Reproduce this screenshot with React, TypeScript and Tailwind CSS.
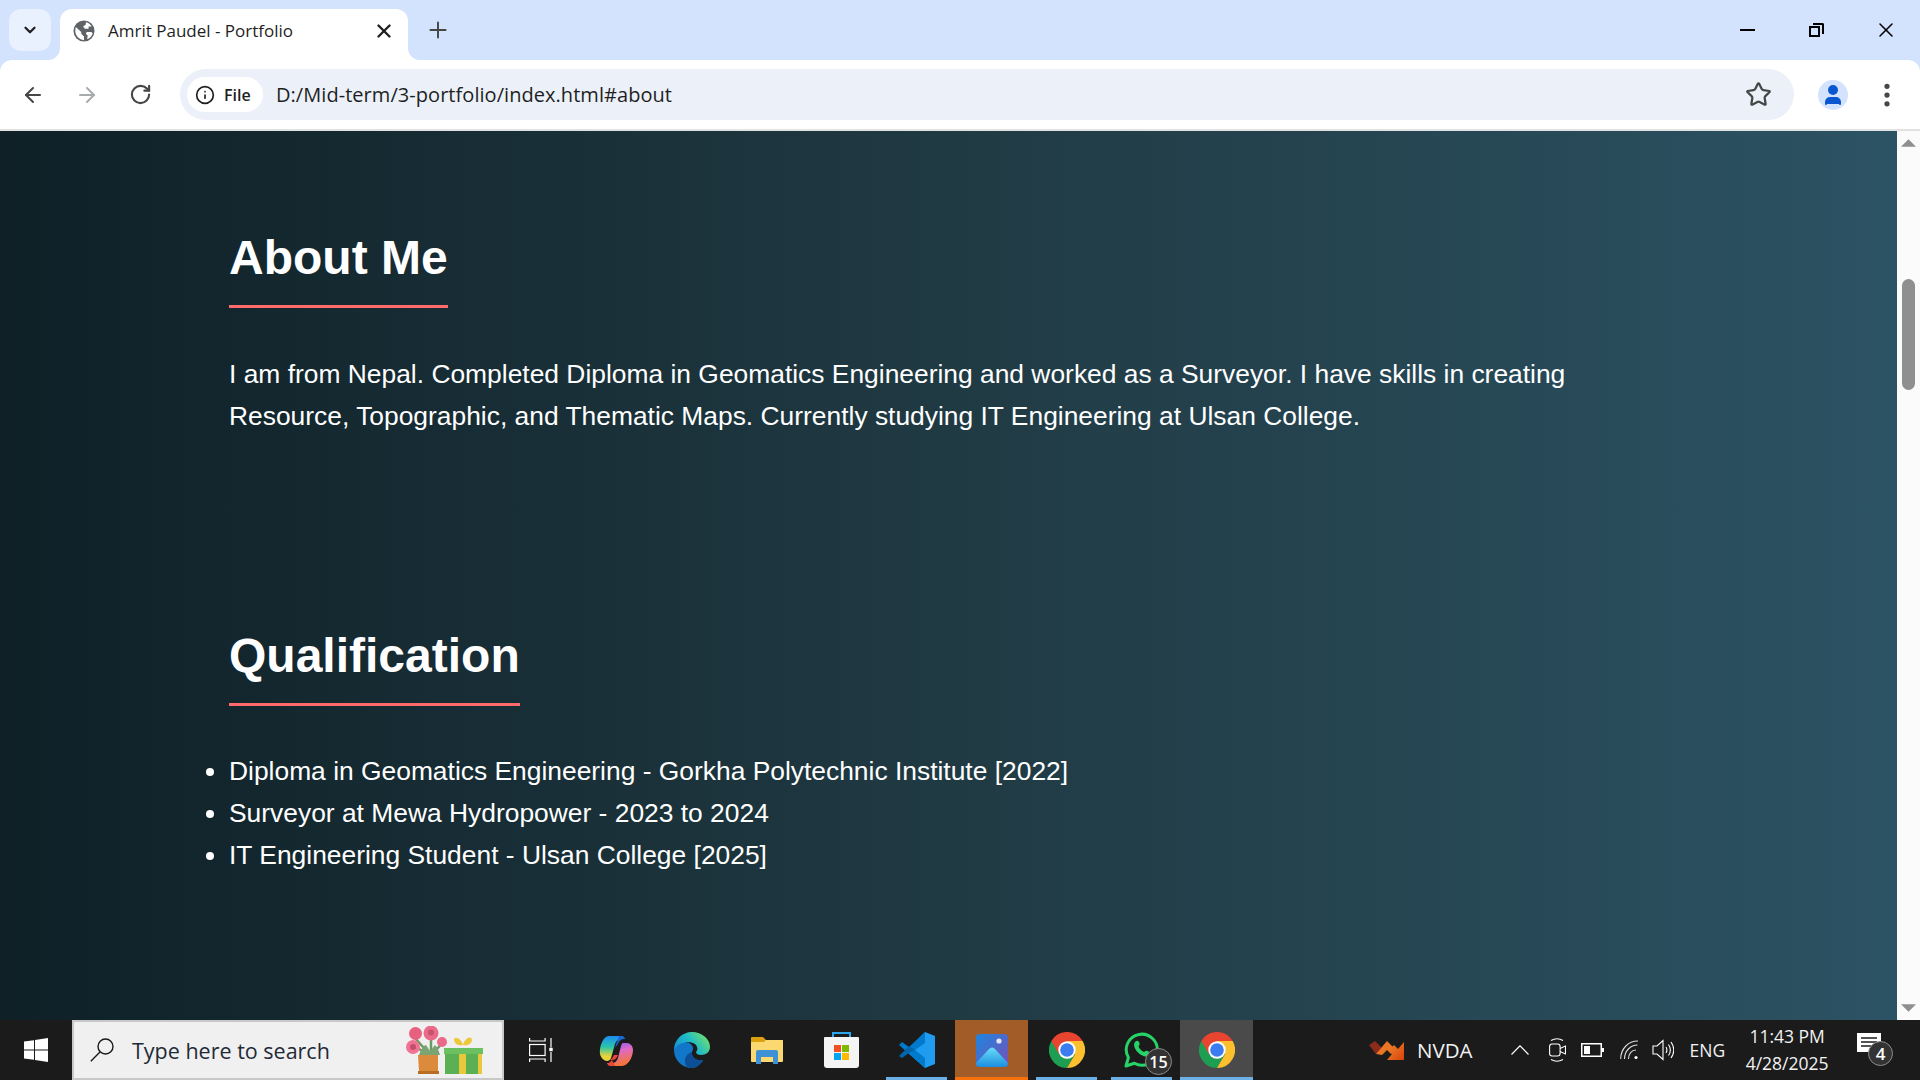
import { ArrowLeft, ArrowRight, ChevronDown, Info, MoreVertical, Plus, RotateCw, Star, User, X } from "lucide-react";
import type { ReactNode } from "react";

const qualifications = [
  "Diploma in Geomatics Engineering - Gorkha Polytechnic Institute [2022]",
  "Surveyor at Mewa Hydropower - 2023 to 2024",
  "IT Engineering Student - Ulsan College [2025]",
];

function ChromeLogo() {
  return (
    <svg viewBox="0 0 36 36" className="h-[36px] w-[36px]">
      <path d="M2.400 9A18 18 0 0 0 18 36l7.800-13.500L18 18z" fill="#1e9e52" />
      <path d="M33.600 9A18 18 0 0 1 18 36l7.800-13.500L18 9z" fill="#fcc02e" />
      <path d="M2.400 9a18 18 0 0 1 31.200 0H18l-7.800 13.500z" fill="#e8442f" />
      <circle cx="18" cy="18" r="8.700" fill="#fff" />
      <circle cx="18" cy="18" r="6.800" fill="#3b7df0" />
    </svg>
  );
}

function Globe() {
  return (
    <svg viewBox="0 0 24 24" className="h-[22px] w-[22px]">
      <circle cx="12" cy="12" r="11.500" fill="#5f6368" />
      <path d="M3 7.500l6 5.500v2l3 3v4C7 21.500 2.500 17 2.500 12c0-1.600.2-3 .5-4.500zM14 2.500c3 .6 5 2.300 6.300 4.500H17v2.500h-4L11 7l3-2zM15 13h5l1.500 1.500c-.8 3-3 5.500-6 6.500L16 17l-2-2z" fill="#fff" />
    </svg>
  );
}

function WindowsLogo() {
  return (
    <svg viewBox="0 0 24 24" className="h-[24px] w-[24px]" fill="#fff">
      <path d="M0 3.600l10-1.400v9.300H0zM11 2L24 0v11.500H11zM0 12.500h10v9.300L0 20.400zM11 12.500h13V24l-13-2z" />
    </svg>
  );
}

function SearchGlass() {
  return (
    <svg viewBox="0 0 24 24" className="h-[24px] w-[24px]" fill="none" stroke="#1a1a1a" strokeWidth="1.400">
      <circle cx="15.500" cy="8.500" r="7.500" />
      <path d="M10 14L.8 23.300" />
    </svg>
  );
}

function TaskView() {
  return (
    <svg viewBox="0 0 24 24" className="h-[24px] w-[24px]" fill="none" stroke="#fff" strokeWidth="1.200">
      <path d="M.6 0v3h15.500V0M.6 24v-3h15.500v3" />
      <rect x="0.600" y="6.500" width="15.500" height="11" />
      <path d="M22 0v9.500M22 14v10" />
      <rect x="20.300" y="9.800" width="3.400" height="3.400" fill="#fff" stroke="none" />
    </svg>
  );
}

function Copilot() {
  return (
    <svg viewBox="0 0 34 31" className="h-[31px] w-[34px]">
      <defs>
        <linearGradient id="copilotA" x1="0" y1="0" x2="0" y2="1">
          <stop offset="0" stopColor="#1b8cf0" />
          <stop offset="0.450" stopColor="#2cc6a8" />
          <stop offset="0.800" stopColor="#e7d33a" />
        </linearGradient>
        <linearGradient id="copilotB" x1="0" y1="0" x2="0.300" y2="1">
          <stop offset="0" stopColor="#7a5cf0" />
          <stop offset="0.450" stopColor="#e06ac8" />
          <stop offset="1" stopColor="#f4743a" />
        </linearGradient>
      </defs>
      <path d="M10 1h12c2 0 3 1 4 3h-4c-3 0-5 2-6 5l-4 14c-1 2-2 3-4 3-3 0-6-3-7-7C0 12 4 1 10 1z" fill="url(#copilotA)" />
      <path d="M24 8h4c3 0 6 3 6 7 0 7-5 16-11 16H12c-2 0-3-1-4-3h5c3 0 5-2 6-5l3-12c.4-1.500 1-3 2-3z" fill="url(#copilotB)" />
      <path d="M13 25c3 0 5-2 6-5l-4 0c-1 2-2 4-4 5zM8 28c2 0 3-.5 5-3l3 6h-4c-2 0-3-1-4-3z" fill="#e8473a" />
      <path d="M20 1h2c2 0 3 1 4 3-4 0-6 2-7 5l-3 4z" fill="#1668d8" />
    </svg>
  );
}

function Edge() {
  return (
    <svg viewBox="0 0 36 36" className="h-[36px] w-[36px]">
      <defs>
        <linearGradient id="edgeTop" x1="0" y1="0.800" x2="1" y2="0.300">
          <stop offset="0" stopColor="#0f8fdc" />
          <stop offset="0.550" stopColor="#22bcc4" />
          <stop offset="1" stopColor="#72e06a" />
        </linearGradient>
      </defs>
      <path d="M18 0c10 0 18 7 18 15 0 5-4 8-9 8-3 0-5-1-5-3 2-2 2-5-1-8-5-3-13-2-17 4-3 4-4 4-4 2C0 8 8 0 18 0z" fill="url(#edgeTop)" />
      <path d="M0 18c3-6 10-9 15-7 4 2 5 5 3 9-1 5 4 9 10 8 1 0 1 1 0 2-3 3-6 6-10 6C8 36 0 28 0 18z" fill="#1277c9" />
      <path d="M18 20c-1 5 4 9 10 8 1 0 1 1 0 2-3 3-6 6-10 6-5 0-7-2-7-7 0-5 3-8 7-9z" fill="#0d4f96" />
    </svg>
  );
}

function Folder() {
  return (
    <svg viewBox="0 0 32 27" className="h-[27px] w-[32px]">
      <path d="M0 1a1 1 0 0 1 1-1h11l3 3h17v6H0z" fill="#dda10f" />
      <path d="M0 5h13l2-2h16a1 1 0 0 1 1 1v20a1 1 0 0 1-1 1H1a1 1 0 0 1-1-1z" fill="#fcd870" />
      <path d="M5 27V15a2 2 0 0 1 2-2h18a2 2 0 0 1 2 2v12h-5v-7H10v7z" fill="#3f91d6" />
    </svg>
  );
}

function Store() {
  return (
    <svg viewBox="0 0 36 36" className="h-[36px] w-[36px]">
      <path d="M9 6V1h17v5" fill="none" stroke="#2aa5ee" strokeWidth="2" />
      <path d="M1 5h33a1 1 0 0 1 1 1v27a3 3 0 0 1-3 3H3a3 3 0 0 1-3-3V6a1 1 0 0 1 1-1z" fill="#f4f4f4" />
      <rect x="10" y="13" width="7" height="7" fill="#f25022" />
      <rect x="18" y="13" width="7" height="7" fill="#7fba00" />
      <rect x="10" y="21" width="7" height="7" fill="#00a4ef" />
      <rect x="18" y="21" width="7" height="7" fill="#ffb900" />
    </svg>
  );
}

function VsCode() {
  return (
    <svg viewBox="0 0 36 36" className="h-[36px] w-[36px]">
      <path d="M26 0l10 4v28l-10 4L8 20z" fill="#1f9cf0" />
      <path d="M26 0v11l-10 7 10 8v10L0 13l3-3 7 5z" fill="#007acc" />
      <path d="M0 24l3 2 7-5 6-3-6-4z" fill="#0065a9" />
    </svg>
  );
}

function Photos() {
  return (
    <svg viewBox="0 0 32 33" className="h-[33px] w-[32px]">
      <defs>
        <linearGradient id="photosBg" x1="0" y1="0" x2="1" y2="1">
          <stop offset="0" stopColor="#1c86e0" />
          <stop offset="1" stopColor="#7a4fb5" />
        </linearGradient>
        <linearGradient id="photosHill" x1="0" y1="0" x2="0" y2="1">
          <stop offset="0" stopColor="#6adcf7" />
          <stop offset="1" stopColor="#1b8fe0" />
        </linearGradient>
      </defs>
      <rect width="32" height="33" rx="4" fill="url(#photosBg)" />
      <circle cx="23" cy="7" r="2.600" fill="#e6e6f5" />
      <path d="M0 29L13 15c2-2 4-2 6 0l11 12c1 1 2 2 2 3v-1a4 4 0 0 1-4 4H4a4 4 0 0 1-4-4z" fill="url(#photosHill)" />
    </svg>
  );
}

function WhatsApp() {
  return (
    <svg viewBox="0 0 36 36" className="h-[36px] w-[36px]">
      <path d="M2 34l2.400-8.500a15.500 15.500 0 1 1 6 5.800z" fill="none" stroke="#25d366" strokeWidth="3" strokeLinejoin="round" />
      <path d="M11 10c2-2 3.500-1.500 4.500 1 .5 1.500-.5 2.500-1 3.500 1 2.500 3 4.500 5.500 5.500 1-.5 2-1.500 3.500-1 2.500 1 3 2.500 1 4.500-2.500 2-7 .5-10.500-3-3.500-3.500-5-8-3-10.500z" fill="#25d366" />
    </svg>
  );
}

function Flowers() {
  return (
    <svg viewBox="0 0 78 48" className="h-[48px] w-[78px]">
      <path d="M25 30L25 10M25 30l12-14M25 30L9 12M25 30L8 20" stroke="#6a9a62" strokeWidth="2.500" fill="none" />
      <path d="M13 29c3-8 6-10 7-10l4 6 5-6c2 2 4 6 5 10z" fill="#7ba472" />
      <circle cx="25" cy="7" r="7.500" fill="#ea6a8a" />
      <circle cx="25" cy="6.500" r="3" fill="#c9536f" />
      <circle cx="9.500" cy="7.500" r="6.500" fill="#e8607f" />
      <circle cx="7" cy="21" r="7" fill="#f07393" />
      <circle cx="7" cy="21" r="3" fill="#c44f6c" />
      <circle cx="36" cy="16" r="5" fill="#ea6a8a" />
      <path d="M12 29h20v16H13z" fill="#dc8a3c" />
      <rect x="12" y="45" width="21" height="3" fill="#b86d25" />
      <rect x="39" y="23" width="37" height="25" fill="#5cb054" />
      <rect x="53" y="23" width="7" height="25" fill="#e8c93c" />
      <rect x="72" y="23" width="4" height="25" fill="#e8c93c" />
      <rect x="38" y="22" width="39" height="6" fill="#6cc060" />
      <path d="M57 19c-7 2-11-5-8-7 3-1 7 3 8 7 1-4 5-9 8-7 3 2-1 9-8 7z" fill="#edc83a" />
    </svg>
  );
}

function Nvda() {
  return (
    <svg viewBox="0 0 35 21" className="h-[21px] w-[35px]">
      <defs>
        <linearGradient id="nvdaArrow" x1="0" y1="0" x2="1" y2="1">
          <stop offset="0" stopColor="#f08a2c" />
          <stop offset="1" stopColor="#d9420c" />
        </linearGradient>
      </defs>
      <path d="M0 5l6-4 7 7-6 6z" fill="#8a2b1c" />
      <path d="M7 14L18 1l9 9-5 4-4-4-5 5z" fill="#ea7524" />
      <path d="M35 2v18H18l5-6-3-4 5-5 4 4z" fill="url(#nvdaArrow)" />
    </svg>
  );
}

function MeetIcon() {
  return (
    <svg viewBox="0 0 17 24" className="h-[24px] w-[17px]" fill="none" stroke="#fff" strokeWidth="1.100">
      <rect x="0.600" y="6" width="10.500" height="12" rx="2.500" />
      <path d="M11 10.500l5.500-2.500v8l-5.500-2.500M2 2.500c3.500-2 8.500-2 12 0M2 21.500c3.500 2 8.500 2 12 0" />
    </svg>
  );
}

function BatteryIcon() {
  return (
    <svg viewBox="0 0 23 14" className="h-[14px] w-[23px]">
      <rect x="0.750" y="0.750" width="19.500" height="12.500" fill="none" stroke="#fff" strokeWidth="1.500" />
      <rect x="3" y="3" width="6" height="8" fill="#fff" />
      <rect x="21" y="5" width="2" height="4" fill="#fff" />
    </svg>
  );
}

function WifiIcon() {
  return (
    <svg viewBox="0 0 19 20" className="h-[20px] w-[19px]" fill="none" stroke="#ddd" strokeWidth="1.100">
      <path d="M.7 19C.7 9 8 1 18 1M4.500 19c0-8 6-14 13-14M8.500 19c0-5 3-9 7.500-9" />
      <circle cx="16" cy="17.500" r="1.600" fill="#fff" stroke="none" />
    </svg>
  );
}

function VolumeIcon() {
  return (
    <svg viewBox="0 0 22 22" className="h-[22px] w-[22px]" fill="none" stroke="#fff" strokeWidth="1.100">
      <path d="M1 7h4l6-5.500v19L5 15H1zM14 8c1.200 2 1.200 4 0 6M16.500 5.500c2.400 3.500 2.400 7.500 0 11M19 3c3.500 5 3.500 11 0 16" />
    </svg>
  );
}

function ScrollTriangle({ down }: { down?: boolean }) {
  return (
    <svg viewBox="0 0 16 8" className="h-[8px] w-[15px]">
      <path d={down ? "M0 0h16L8 8z" : "M8 0l8 8H0z"} fill="#8f8f8f" />
    </svg>
  );
}

function TaskbarIcon({ children, state }: { children: ReactNode; state?: "open" | "active" | "flash" }) {
  return (
    <div className="flex h-full w-[75px] justify-center">
      <div
        className={[
          "relative flex h-full items-center justify-center",
          state === "active" || state === "flash" ? "w-[73px]" : "w-[61px]",
          state === "active" ? "bg-[#4a4a4a]" : "",
          state === "flash" ? "bg-[#a15c28]" : "",
        ].join(" ")}
      >
        {children}
        {(state === "open" || state === "active") && (
          <span className="absolute inset-x-0 bottom-0 h-[3px] bg-[#6cb0e8]" />
        )}
        {state === "flash" && <span className="absolute inset-x-0 bottom-0 h-[3px] bg-[#f7700c]" />}
      </div>
    </div>
  );
}

function Badge({ value, className }: { value: string; className: string }) {
  return (
    <span
      className={[
        "absolute flex items-center justify-center rounded-full border border-[#8c8c8c] bg-[#333333] font-semibold text-white",
        className,
      ].join(" ")}
    >
      {value}
    </span>
  );
}

export default function App() {
  return (
    <div className="flex h-screen w-full flex-col overflow-hidden bg-black font-['Open_Sans',sans-serif]">
      {/* tab strip */}
      <div className="flex h-[60px] shrink-0 items-end bg-[#d3e3fd] pl-[9px]">
        <div className="mb-[9px] flex h-[42px] w-[42px] items-center justify-center rounded-[12px] bg-[#e9f0fe]">
          <ChevronDown className="h-[18px] w-[18px] text-[#1f1f1f]" strokeWidth={3} />
        </div>
        <div className="relative z-10 ml-[9px] flex h-[51px] w-[348px] items-center rounded-t-[12px] bg-white pb-[7px] pl-[13px] pr-[13px]">
          <svg viewBox="0 0 12 12" className="absolute -left-[12px] bottom-0 h-[12px] w-[12px]" fill="#fff">
            <path d="M12 0A12 12 0 0 1 0 12h12z" />
          </svg>
          <svg viewBox="0 0 12 12" className="absolute -right-[12px] bottom-0 h-[12px] w-[12px]" fill="#fff">
            <path d="M0 0a12 12 0 0 0 12 12H0z" />
          </svg>
          <Globe />
          <span className="ml-[13px] flex-1 text-[17px] text-[#1f1f1f]">Amrit Paudel - Portfolio</span>
          <X className="h-[22px] w-[22px] text-[#1f1f1f]" strokeWidth={2.600} />
        </div>
        <Plus className="mb-[17px] ml-[17px] h-[26px] w-[26px] text-[#444746]" strokeWidth={1.800} />
        <div className="mb-[18px] ml-auto flex items-center pr-[22px]">
          <span className="h-[2px] w-[15px] bg-black" />
          <span className="relative ml-[54px] h-[14px] w-[15px]">
            <span className="absolute bottom-0 left-0 h-[11px] w-[11px] border-2 border-black" />
            <span className="absolute right-0 top-0 h-[11px] w-[11px] rounded-tr-[2px] border-r-2 border-t-2 border-black" />
          </span>
          <X className="ml-[50px] h-[24px] w-[24px] text-black" strokeWidth={1.500} />
        </div>
      </div>

      {/* toolbar */}
      <div className="flex h-[71px] shrink-0 items-center border-b-2 border-[#e2e2e2] bg-[#d3e3fd]">
        <div className="flex h-full w-full items-center rounded-t-[12px] bg-white pl-[21px]">
          <ArrowLeft className="h-[24px] w-[24px] text-[#444746]" strokeWidth={2} />
          <ArrowRight className="ml-[30px] h-[24px] w-[24px] text-[#a8abad]" strokeWidth={2} />
          <RotateCw className="ml-[30px] h-[23px] w-[23px] text-[#444746]" strokeWidth={2.200} />
          <div className="ml-[28px] flex h-[51px] w-[1614px] items-center rounded-full bg-[#ecf1f9] pl-[7px] pr-[22px]">
            <div className="flex h-[35px] w-[76px] items-center gap-[9px] rounded-full bg-white pl-[8px]">
              <Info className="h-[20px] w-[20px] text-[#1f1f1f]" strokeWidth={2} />
              <span className="text-[16px] font-semibold text-[#1f1f1f]">File</span>
            </div>
            <span className="ml-[13px] flex-1 text-[20px] tracking-[0.05px] text-[#1f1f1f]">D:/Mid-term/3-portfolio/index.html#about</span>
            <Star className="h-[27px] w-[27px] text-[#444746]" strokeWidth={2} />
          </div>
          <div className="ml-[24px] flex h-[30px] w-[30px] items-center justify-center rounded-full bg-[#d3e3fd]">
            <User className="h-[24px] w-[24px] fill-[#0b57d0] text-[#0b57d0]" strokeWidth={2} />
          </div>
          <MoreVertical className="ml-[24px] h-[30px] w-[30px] text-[#444746]" strokeWidth={2.200} />
        </div>
      </div>

      {/* page viewport */}
      <div className="flex min-h-0 flex-1">
        <main className="flex-1 overflow-hidden bg-gradient-to-r from-[#0f2027] via-[#203a43] to-[#2c5364] pl-[229px] pr-[300px] pt-[99px] font-['Liberation_Sans',sans-serif] text-white">
          <section>
            <h2 className="inline-block border-b-[3px] border-[#ff6b6b] pb-[20px] text-[48px] font-bold leading-[55px]">About Me</h2>
            <p className="mt-[45px] text-[26.400px] leading-[42px]">
              I am from Nepal. Completed Diploma in Geomatics Engineering and worked as a Surveyor. I have skills in creating Resource, Topographic, and Thematic Maps. Currently studying IT Engineering at Ulsan College.
            </p>
          </section>
          <section className="mt-[191px]">
            <h2 className="inline-block border-b-[3px] border-[#ff6b6b] pb-[20px] text-[48px] font-bold leading-[55px]">Qualification</h2>
            <ul className="mt-[44px] list-disc text-[26.400px] leading-[42px]">
              {qualifications.map((item) => (
                <li key={item}>{item}</li>
              ))}
            </ul>
          </section>
        </main>
        <div className="flex w-[23px] shrink-0 flex-col items-center bg-[#fbfbfb] py-[8px]">
          <ScrollTriangle />
          <div className="mt-[132px] h-[111px] w-[13px] rounded-full bg-[#8f8f8f]" />
          <div className="flex-1" />
          <ScrollTriangle down />
        </div>
      </div>

      {/* taskbar */}
      <div className="flex h-[60px] shrink-0 items-center bg-[#1b1b1b] text-white">
        <div className="flex h-full w-[72px] items-center justify-center">
          <WindowsLogo />
        </div>
        <div className="flex h-full w-[432px] items-center border-2 border-[#c8c8c8] bg-[#f0f0f0] pl-[16px] pr-[18px]">
          <SearchGlass />
          <span className="ml-[18px] flex-1 pt-[3px] text-[21.500px] text-[#1f2a37]">Type here to search</span>
          <Flowers />
        </div>
        <div className="flex w-[74px] items-center justify-center">
          <TaskView />
        </div>
        <div className="flex h-full w-[76px] items-center justify-center">
          <Copilot />
        </div>
        <div className="flex h-full">
          <TaskbarIcon><Edge /></TaskbarIcon>
          <TaskbarIcon><Folder /></TaskbarIcon>
          <TaskbarIcon><Store /></TaskbarIcon>
          <TaskbarIcon state="open"><VsCode /></TaskbarIcon>
          <TaskbarIcon state="flash"><Photos /></TaskbarIcon>
          <TaskbarIcon state="open"><ChromeLogo /></TaskbarIcon>
          <TaskbarIcon state="open">
            <WhatsApp />
            <Badge value="15" className="left-[34px] top-[28px] h-[27px] w-[27px] text-[16px]" />
          </TaskbarIcon>
          <TaskbarIcon state="active"><ChromeLogo /></TaskbarIcon>
        </div>
        <div className="flex h-full items-center pl-[115px]">
          <Nvda />
          <span className="ml-[13px] text-[20.500px] text-[#f2f2f2]">NVDA</span>
          <svg viewBox="0 0 18 10" className="ml-[38px] h-[10px] w-[18px]" fill="none" stroke="#fff" strokeWidth="1.200">
            <path d="M.5 9.500L9 .8l8.500 8.700" />
          </svg>
          <span className="ml-[20px]"><MeetIcon /></span>
          <span className="ml-[15px]"><BatteryIcon /></span>
          <span className="ml-[16px]"><WifiIcon /></span>
          <span className="ml-[13px]"><VolumeIcon /></span>
          <span className="ml-[16px] text-[17.500px] text-[#f2f2f2]">ENG</span>
          <div className="ml-[20px] flex w-[84px] flex-col items-center text-[17.500px] leading-[27px] text-[#f2f2f2]">
            <span>11:43 PM</span>
            <span>4/28/2025</span>
          </div>
          <div className="relative ml-[28px] h-[34px] w-[26px]">
            <svg viewBox="0 0 24 26" className="h-[26px] w-[24px]" fill="#fff">
              <path d="M0 0h24v19h-6l-4 6v-6H0z" />
              <path d="M4 5h16M4 9h16M4 13h10" stroke="#1b1b1b" strokeWidth="1.300" />
            </svg>
            <Badge value="4" className="left-[11px] top-[8px] h-[25px] w-[25px] text-[17px]" />
          </div>
        </div>
      </div>
    </div>
  );
}
